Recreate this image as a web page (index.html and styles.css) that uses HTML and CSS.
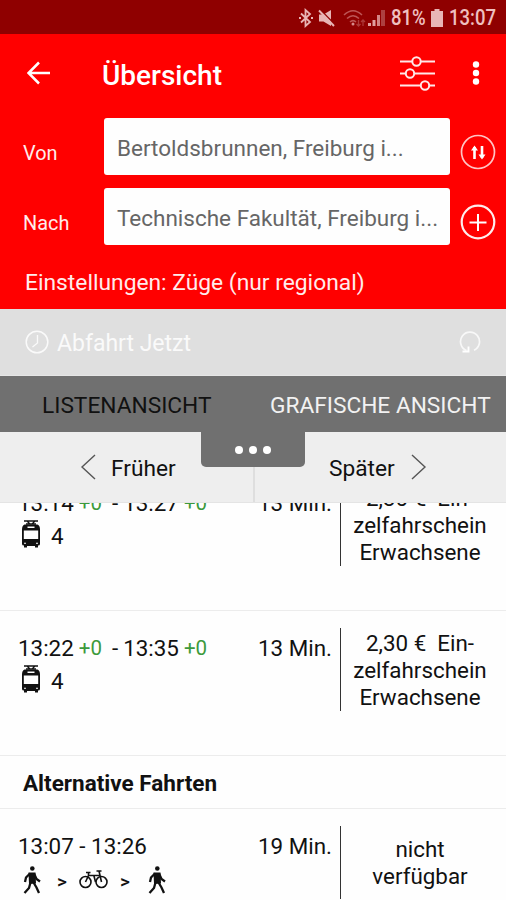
FILE: index.html
```html
<!DOCTYPE html>
<html lang="de">
<head>
<meta charset="utf-8">
<title>Übersicht</title>
<link rel="stylesheet" href="styles.css">
</head>
<body>
<svg class="defs" width="0" height="0">
  <symbol id="tram" viewBox="0 0 20 28">
    <path d="M3 1h14M6 1l3 3h2l3-3M5 4h10" fill="none" stroke="#111" stroke-width="1.300"/>
    <path fill="#111" fill-rule="evenodd" d="M3.500 4.500h13q2.500 1 2.500 5V24q0 1.500-2 1.500v2h-3v-1.500H6v1.500H3v-2q-2 0-2-1.500V9.500q0-4 2.500-5zM6.500 6.500v1.500h7v-1.500zM2.800 10.500v8.500h14.400v-8.500zM3 22.700v1h2v-1zM15 22.700v1h2v-1z"/>
  </symbol>
  <symbol id="walk" viewBox="0 0 18 28">
    <circle cx="9.300" cy="2.500" r="2.300" fill="#111"/>
    <path d="M5.500 6.500h7l.5 11-7 .5z" fill="#111"/>
    <path d="M7 7.500 3 11.500 2 16M11 7.500l2.500 5.500 3.500 2.500M7.500 16.500 6 22l-4.500 5M10.500 16.500l3 5 2.500 5.500" stroke="#111" stroke-width="2.300" fill="none"/>
  </symbol>
</svg>
<div class="status">
  <svg width="14" height="20" viewBox="0 0 14 20"><path d="M2 5.500l9 8.500-4.500 4V2L11 6l-9 8.500" fill="none" stroke="#e8b5b5" stroke-width="1.800"/><path d="M0 10h2M12 10h2" stroke="#e8b5b5" stroke-width="2"/></svg>
  <svg class="mute" width="17" height="18" viewBox="0 0 17 18"><path d="M1 5.500h4.500L13 1v16l-7.500-4.500H1z" fill="#e8b5b5"/><path d="M2 .5l15 15" stroke="#8f0000" stroke-width="1.500"/><path d="M1 1.500l15 15.500" stroke="#e8b5b5" stroke-width="1.900"/></svg>
  <svg class="wifi" width="23" height="18" viewBox="0 0 23 18"><path d="M1 6q9-8.500 18 0M4 9.500q6-5.500 12 0M7 13q3-2.700 6 0" fill="none" stroke="#bd5555" stroke-width="1.600"/><circle cx="10" cy="15" r="1.500" fill="#d68b8b"/><path d="M15.500 11v6M13.500 15l2 2 2-2M20 17v-6M18 13l2-2 2 2" fill="none" stroke="#ad3838" stroke-width="1.300"/></svg>
  <svg class="signal" width="17" height="18" viewBox="0 0 17 18"><path d="M0 14h3v3H0zM4.500 11h3v6h-3z" fill="#e0a0a0"/><path d="M9 6h3v11H9z" fill="#d48686"/><path d="M13 1h4v16h-4z" fill="#ad4040"/></svg>
  <span class="status-text percent">81%</span>
  <svg class="battery" width="12" height="18" viewBox="0 0 12 18"><path d="M3.500 0h5v2H12v16H0V2h3.500z" fill="#e8b5b5"/></svg>
  <span class="status-text clock">13:07</span>
</div>
<header class="header">
  <div class="appbar">
    <svg class="back" width="24" height="24" viewBox="0 0 24 24"><path d="M23 12H2M12 1.500 1.500 12 12 22.500" fill="none" stroke="#fff" stroke-width="2.500"/></svg>
    <h1 class="title">Übersicht</h1>
    <svg class="filter" width="35" height="35" viewBox="0 0 35 35"><g fill="none" stroke="#ffe8e8" stroke-width="2"><path d="M0 5.500h12M21 5.500h14M0 17.500h5.500M14.500 17.500H35M0 29.500h20.500M29.500 29.500H35"/><circle cx="16.500" cy="5.500" r="4.200"/><circle cx="10" cy="17.500" r="4.200"/><circle cx="25" cy="29.500" r="4.200"/></g></svg>
    <svg class="more" width="8" height="24" viewBox="0 0 8 24"><g fill="#fff"><circle cx="4" cy="3.500" r="3.200"/><circle cx="4" cy="12" r="3.200"/><circle cx="4" cy="20.500" r="3.200"/></g></svg>
  </div>
  <div class="field-row">
    <label class="field-label von">Von</label>
    <div class="field"><span class="from">Bertoldsbrunnen, Freiburg i...</span></div>
    <svg class="round" width="36" height="36" viewBox="0 0 36 36"><circle cx="18" cy="18" r="16.500" fill="none" stroke="#ffc4c4" stroke-width="1.700"/><path d="M14.500 25V13M22 12v12" stroke="#fff" stroke-width="2.600"/><path d="M11 16.500l3.500-5 3.500 5zM18.500 20.500l3.500 5 3.500-5z" fill="#fff"/></svg>
  </div>
  <div class="field-row">
    <label class="field-label">Nach</label>
    <div class="field"><span class="to">Technische Fakultät, Freiburg i...</span></div>
    <svg class="round" width="36" height="36" viewBox="0 0 36 36"><circle cx="18" cy="18" r="16.300" fill="none" stroke="#ffecec" stroke-width="2.200"/><path d="M9.500 18.500h17M18 10v17" stroke="#fff" stroke-width="2"/></svg>
  </div>
  <p class="settings">Einstellungen: Züge (nur regional)</p>
</header>
<div class="departure">
  <svg width="24" height="24" viewBox="0 0 24 24"><circle cx="12" cy="12" r="10.800" fill="none" stroke="#fafafa" stroke-width="1.500"/><path d="M12.500 5v8l-5 4" fill="none" stroke="#fafafa" stroke-width="1.300"/></svg>
  <span class="departure-text">Abfahrt Jetzt</span>
  <svg class="refresh" width="22" height="24" viewBox="0 0 22 24"><path d="M15 20.300A9.500 9.500 0 1 0 7.500 20.500" fill="none" stroke="#f8f8f8" stroke-width="1.700"/><path d="M3.500 21.500h6v-5" fill="none" stroke="#fff" stroke-width="1.900"/></svg>
</div>
<nav class="tabs">
  <span class="tab list-tab">LISTENANSICHT</span>
  <span class="tab graph-tab">GRAFISCHE ANSICHT</span>
</nav>
<div class="pager">
  <div class="earlier"><svg width="16" height="26" viewBox="0 0 16 26"><path d="M15 1 2 13l13 12" fill="none" stroke="#555" stroke-width="1.400"/></svg><span>Früher</span></div>
  <div class="later"><span>Später</span><svg width="16" height="26" viewBox="0 0 16 26"><path d="M1 1l13 12L1 25" fill="none" stroke="#555" stroke-width="1.400"/></svg></div>
  <div class="handle"><i></i><i></i><i></i></div>
</div>
<main class="results">
  <section class="trip trip-first">
    <div class="route">
      <div class="times"><span>13:14</span><b>+0</b><span class="dash">-</span><span>13:27</span><b>+0</b></div>
      <div class="line"><svg class="tram" width="20" height="28"><use href="#tram"/></svg><span>4</span></div>
    </div>
    <div class="duration">13 Min.</div>
    <div class="price">2,30 €&nbsp; Ein-<br>zelfahrschein<br>Erwachsene</div>
  </section>
  <section class="trip">
    <div class="route">
      <div class="times"><span>13:22</span><b>+0</b><span class="dash">-</span><span>13:35</span><b>+0</b></div>
      <div class="line"><svg class="tram" width="20" height="28"><use href="#tram"/></svg><span>4</span></div>
    </div>
    <div class="duration">13 Min.</div>
    <div class="price">2,30 €&nbsp; Ein-<br>zelfahrschein<br>Erwachsene</div>
  </section>
  <h2 class="alt-title">Alternative Fahrten</h2>
  <section class="trip trip-alt">
    <div class="route">
      <div class="times">13:07 - 13:26</div>
      <div class="modes">
        <svg width="18" height="28"><use href="#walk"/></svg>
        <span class="sep">&gt;</span>
        <svg class="bike" width="29" height="19" viewBox="0 0 29 19"><g fill="none" stroke="#111" stroke-width="1.600"><circle cx="6.500" cy="12" r="5.500"/><circle cx="22.500" cy="12" r="5.500"/><path d="M6.500 12 9.500 5.500H20.500M16.500 12 15 6M7 2.500h4.500M9.500 5.500V2.500M22.500 12 20 1M17.500 1h5"/></g></svg>
        <span class="sep">&gt;</span>
        <svg class="walk-last" width="18" height="28"><use href="#walk"/></svg>
      </div>
    </div>
    <div class="duration">19 Min.</div>
    <div class="price unavailable">nicht<br>verfügbar</div>
  </section>
</main>
</body>
</html>
```
FILE: styles.css
```css
* { box-sizing: border-box; }
body {
  margin: 0;
  width: 506px;
  height: 900px;
  overflow: hidden;
  display: flex;
  flex-direction: column;
  background: #fefefe;
  color: #111;
  font: 22.4px/27px Roboto, "Liberation Sans", sans-serif;
}
svg { display: block; flex: none; }
span { white-space: nowrap; }
.defs { position: absolute; }

.status {
  height: 34px;
  flex: none;
  display: flex;
  align-items: center;
  padding: 1px 0 0 299px;
  background: #8f0000;
  color: #efc0c0;
}
.mute { margin-left: 5px; }
.wifi { margin-left: 8px; }
.signal { margin-left: 2px; }
.status-text {
  font-size: 21.5px;
  font-weight: 500;
  transform: scaleX(.86);
  transform-origin: left center;
}
.percent { width: 35px; margin-left: 6px; }
.battery { margin-left: 5px; }
.clock { margin-left: 6px; }

.header {
  height: 275px;
  flex: none;
  display: flex;
  flex-direction: column;
  background: #f00;
  color: #ffecec;
}
.appbar { height: 84px; flex: none; display: flex; align-items: center; padding: 0 0 6px 27px; }
.title { margin: 4px 0 0 51px; width: 298px; font-size: 28px; font-weight: 500; color: #fff; }
.more { margin-left: 37px; }
.field-row { height: 57px; flex: none; margin-bottom: 13px; display: flex; align-items: center; }
.field-label { width: 104px; padding: 13px 0 0 23px; font-size: 19.9px; }
.field {
  width: 346px;
  height: 57px;
  margin-right: 10px;
  padding: 17px 0 0 13px;
  border-radius: 3px;
  background: #fefefe;
  color: #666;
  font-size: 22.5px;
}
.round { margin-top: 11px; }
.settings { margin: 11px 0 0 25px; font-size: 22.8px; }

.departure {
  height: 67px;
  flex: none;
  display: flex;
  align-items: center;
  padding-left: 25px;
  border-bottom: 1px solid #e6e6e6;
  background: #dfdfdf;
  color: #fafafa;
}
.departure-text { width: 410px; padding: 2px 0 0 8px; font-size: 23px; }

.tabs { height: 56px; flex: none; display: flex; padding: 16px 0 0 42px; background: #707070; font-size: 22.7px; }
.graph-tab { color: #f2f2f2; }
.list-tab { width: 228px; }

.pager {
  position: relative;
  height: 71px;
  flex: none;
  display: flex;
  background: #eee;
  border-bottom: 1px solid #e4e4e4;
  font-size: 22.7px;
}
.earlier, .later { display: flex; align-items: center; padding-bottom: 1px; }
.earlier span, .later span { padding-top: 3px; }
.earlier { width: 255px; padding-left: 80px; gap: 15px; border-right: 2px solid #dedede; }
.later { padding-left: 74px; gap: 16px; }
.handle {
  position: absolute;
  left: 201px;
  top: 0;
  width: 104px;
  height: 35px;
  padding-top: 14px;
  display: flex;
  justify-content: center;
  gap: 6px;
  border-radius: 0 0 5px 5px;
  background: #707070;
}
.handle i { width: 8px; height: 8px; border-radius: 50%; background: #fff; }

.results { flex: 1; min-height: 0; overflow: hidden; }
.trip {
  height: 145px;
  display: grid;
  grid-template-columns: 258px 82px 147px;
  align-items: start;
  padding-top: 17px;
  border-bottom: 1px solid #ececec;
}
.trip-first { margin-top: -37px; }
.route { padding: 7px 0 0 18px; }
.times { display: flex; white-space: pre; }
.times b { margin-left: 5px; font-size: 20.5px; font-weight: 400; color: #3c9a3c; }
.dash { margin: 0 5px 0 10px; }
.line { display: flex; align-items: center; padding: 1px 0 0 3px; }
.line span { padding: 5px 0 0 10px; }
.duration { padding-top: 7px; }
.price {
  height: 83px;
  padding: 2px 0 0 12px;
  border-left: 1px solid #333;
  text-align: center;
  white-space: nowrap;
}
.alt-title { margin: 0; height: 53px; padding: 14px 0 0 23px; border-bottom: 1px solid #ececec; font-size: 22.5px; font-weight: 700; }
.unavailable { height: 73px; padding-top: 10px; }
.modes { display: flex; align-items: center; padding: 4px 0 0 5px; }
.sep { margin: 4px 0 0 16px; width: 12px; font-size: 19px; font-weight: 500; }
.bike { margin-left: 10px; }
.bike + .sep { margin-left: 12px; }
.walk-last { margin-left: 16px; }
```
